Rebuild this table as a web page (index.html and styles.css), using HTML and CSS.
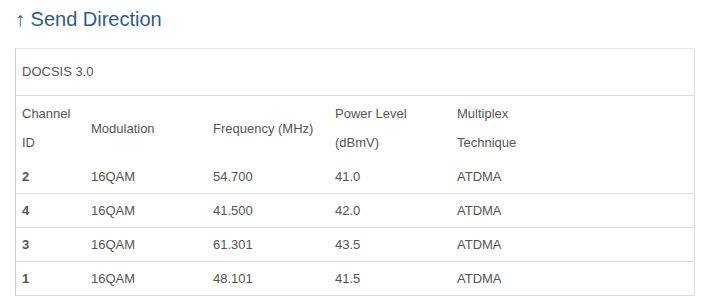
FILE: index.html
```html
<!DOCTYPE html>
<html>
<head>
<meta charset="utf-8">
<link rel="stylesheet" href="styles.css">
</head>
<body>
<h2 class="title">↑ Send Direction</h2>
<div class="panel">
  <div class="panel-head">DOCSIS 3.0</div>
  <table class="grid">
    <colgroup>
      <col class="c1"><col class="c2"><col class="c3"><col class="c4"><col class="c5">
    </colgroup>
    <thead>
      <tr>
        <th>Channel<br>ID</th>
        <th>Modulation</th>
        <th>Frequency (MHz)</th>
        <th>Power Level<br>(dBmV)</th>
        <th>Multiplex<br>Technique</th>
      </tr>
    </thead>
    <tbody>
      <tr><td class="id">2</td><td>16QAM</td><td>54.700</td><td>41.0</td><td>ATDMA</td></tr>
      <tr><td class="id">4</td><td>16QAM</td><td>41.500</td><td>42.0</td><td>ATDMA</td></tr>
      <tr><td class="id">3</td><td>16QAM</td><td>61.301</td><td>43.5</td><td>ATDMA</td></tr>
      <tr><td class="id">1</td><td>16QAM</td><td>48.101</td><td>41.5</td><td>ATDMA</td></tr>
    </tbody>
  </table>
</div>
</body>
</html>
```

FILE: styles.css
```css
html, body {
  margin: 0;
  padding: 0;
  background: #fff;
}
body {
  padding: 0 25px 0 15px;
  font-family: "Liberation Sans", Arial, sans-serif;
  font-size: 13px;
  color: #555;
}
.title {
  margin: 8px 0 18px;
  font-size: 20px;
  line-height: 22px;
  font-weight: normal;
  color: #2f5d8c;
}
.panel {
  border: 1px solid #ddd;
  border-left-color: #ccc;
  border-top-color: #e8e8e8;
}
.panel-head {
  height: 46px;
  line-height: 46px;
  padding: 0 6px;
  border-bottom: 1px solid #ddd;
}
.grid {
  width: 100%;
  border-collapse: collapse;
  table-layout: fixed;
}
.c1 { width: 69px; }
.c2, .c3, .c4 { width: 122px; }
.grid th {
  font-weight: normal;
  text-align: left;
  vertical-align: middle;
  line-height: 29px;
  padding: 3px 6px;
}
.grid td {
  text-align: left;
  line-height: 16px;
  padding: 9px 6px 8px;
  border-top: 1px solid #ddd;
}
.grid tbody tr:first-child td {
  border-top: none;
}
.grid td.id {
  font-weight: bold;
}
```
